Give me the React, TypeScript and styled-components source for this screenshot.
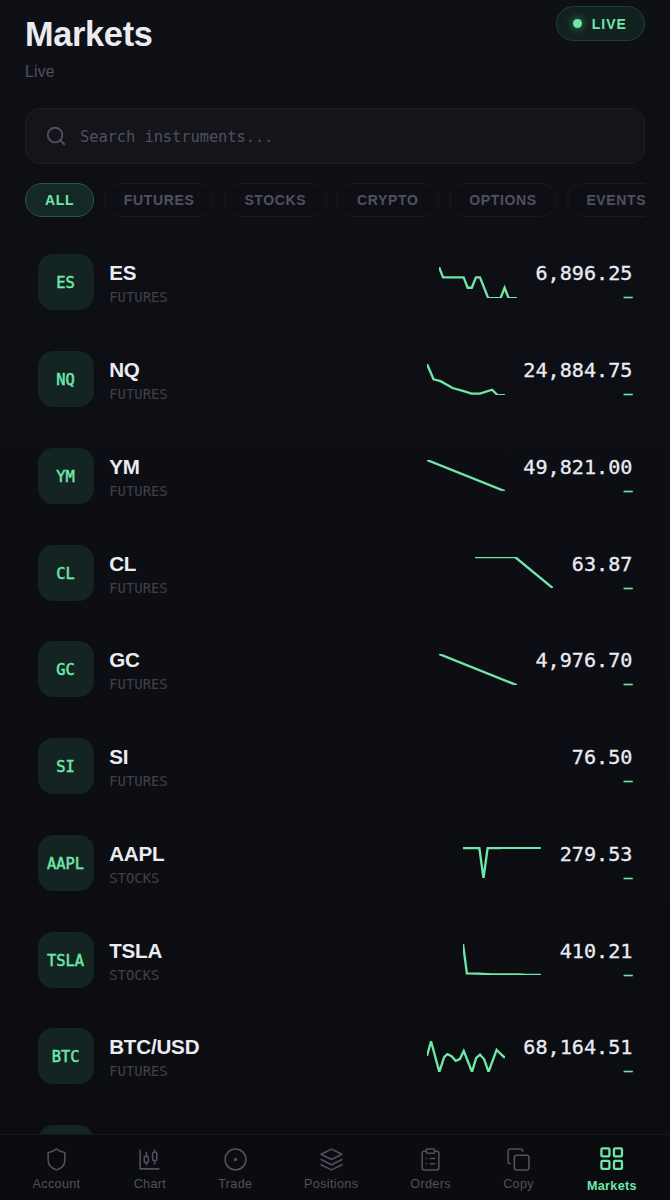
import React from "react";
import styled, { createGlobalStyle, css } from "styled-components";

const GlobalStyle = createGlobalStyle`
  * { box-sizing: border-box; }
  body {
    margin: 0;
    background: #0c0d12;
    font-family: "Liberation Sans", Arial, sans-serif;
    -webkit-font-smoothing: antialiased;
  }
`;

const MONO = `"DejaVu Sans Mono", "Liberation Mono", monospace`;
const GREEN = "#6ee7a8";

const Screen = styled.div`
  display: flex;
  flex-direction: column;
  height: 1200px;
  overflow: hidden;
  background: linear-gradient(180deg, #0f1016 0%, #0d0e13 45%, #0c0d11 100%);
`;

const Content = styled.main`
  display: flex;
  flex-direction: column;
  flex: 1;
  min-height: 0;
  overflow: hidden;
  padding: 6px 25px 0;
`;

const Header = styled.header`
  display: flex;
  justify-content: space-between;
  align-items: flex-start;
  height: 102px;
  flex: none;
`;

const Title = styled.h1`
  margin: 8px 0 0;
  font-size: 34.3px;
  line-height: 40px;
  font-weight: 700;
  letter-spacing: -0.3px;
  color: #ebebf2;
`;

const Subtitle = styled.p`
  margin: 9px 0 0;
  font-size: 15.6px;
  line-height: 18px;
  letter-spacing: 0.3px;
  color: #51505e;
`;

const LiveBadge = styled.div`
  display: flex;
  align-items: center;
  gap: 9.5px;
  width: 89px;
  height: 35px;
  padding-left: 15.8px;
  border: 1.5px solid #1e4038;
  border-radius: 18px;
  background: #11211f;
  color: ${GREEN};
  font-size: 14px;
  font-weight: 700;
  letter-spacing: 1px;
`;

const LiveDot = styled.span`
  width: 9.4px;
  height: 9.4px;
  border-radius: 50%;
  background: ${GREEN};
  box-shadow: 0 0 9px rgba(110, 231, 168, 0.6);
`;

const SearchBox = styled.div`
  display: flex;
  align-items: center;
  gap: 13px;
  flex: none;
  height: 56px;
  padding-left: 19px;
  border: 1.5px solid #1d1e23;
  border-radius: 15.6px;
  background: #14151a;
  color: #51505e;
`;

const Placeholder = styled.span`
  padding-top: 2px;
  font-family: ${MONO};
  font-size: 15.4px;
  letter-spacing: -0.06px;
  color: #51505e;
`;

const Chips = styled.div`
  display: flex;
  flex: none;
  gap: 9.4px;
  margin-top: 18.5px;
  overflow: hidden;
`;

const Chip = styled.div<{ $width: number; $active?: boolean }>`
  display: flex;
  align-items: center;
  justify-content: center;
  flex: none;
  width: ${(p) => p.$width}px;
  height: 34.5px;
  border: 1.5px solid ${(p) => (p.$active ? "#26594a" : "#1a1b20")};
  border-radius: 18px;
  background: ${(p) => (p.$active ? "#142824" : "transparent")};
  color: ${(p) => (p.$active ? GREEN : "#51505e")};
  font-size: 14px;
  font-weight: 700;
  letter-spacing: 0.65px;
`;

const List = styled.div`
  display: flex;
  flex-direction: column;
  margin-top: 17px;
`;

const Row = styled.div`
  display: flex;
  align-items: center;
  flex: none;
  height: 96.75px;
  padding: 0 12.6px;
`;

const Tile = styled.div`
  display: flex;
  align-items: center;
  justify-content: center;
  width: 56px;
  height: 56px;
  padding-top: 2px;
  border-radius: 15.6px;
  background: #142422;
  color: ${GREEN};
  font-family: ${MONO};
  font-size: 15.4px;
  -webkit-text-stroke: 0.5px ${GREEN};
`;

const Names = styled.div`
  display: flex;
  flex-direction: column;
  flex: 1;
  margin-left: 15.6px;
  padding-top: 4px;
`;

const Symbol = styled.div`
  font-size: 20.6px;
  line-height: 26px;
  font-weight: 700;
  letter-spacing: -0.2px;
  color: #ebebf2;
`;

const Kind = styled.div`
  font-family: ${MONO};
  font-size: 13.9px;
  line-height: 22px;
  color: #40404b;
`;

const Spark = styled.svg`
  display: block;
  width: 77.9px;
  height: 31.2px;
  margin-right: 18.7px;
  overflow: hidden;
`;

const Quote = styled.div`
  display: flex;
  flex-direction: column;
  align-items: flex-end;
  padding-top: 4px;
  font-family: ${MONO};
`;

const Price = styled.div`
  font-size: 20.15px;
  line-height: 26px;
  color: #ebebf2;
  -webkit-text-stroke: 0.3px #ebebf2;
`;

const Change = styled.div`
  font-size: 14px;
  line-height: 21px;
  padding-bottom: 1px;
  color: ${GREEN};
  -webkit-text-stroke: 0.6px ${GREEN};
`;

const Nav = styled.nav`
  display: flex;
  justify-content: space-between;
  flex: none;
  height: 66px;
  padding: 11.5px 33px 0 32.5px;
  border-top: 1.5px solid #15161b;
  background: #0b0c10;
`;

const NavItem = styled.div<{ $width: number; $active?: boolean }>`
  display: flex;
  flex-direction: column;
  align-items: center;
  width: ${(p) => p.$width}px;
  color: #51505e;
  font-size: 12.6px;
  line-height: 16px;
  letter-spacing: 0.35px;
  white-space: nowrap;
  ${(p) =>
    p.$active &&
    css`
      color: ${GREEN};
      font-weight: 700;
    `}
`;

const NavIcon = styled.svg<{ $active?: boolean }>`
  flex: none;
  width: ${(p) => (p.$active ? 27.4 : 25)}px;
  height: ${(p) => (p.$active ? 27.4 : 25)}px;
  margin: ${(p) => (p.$active ? "-1.2px 0 5.2px" : "0 0 4.5px")};
  fill: none;
  stroke: currentColor;
  stroke-width: ${(p) => (p.$active ? 2 : 1.5)};
  stroke-linecap: round;
  stroke-linejoin: round;
`;

const SearchIcon = () => (
  <svg width="22" height="22" viewBox="0 0 24 24" fill="none" stroke="currentColor" strokeWidth="2" strokeLinecap="round" strokeLinejoin="round">
    <circle cx="11" cy="11" r="8" />
    <path d="m21 21-4.3-4.3" />
  </svg>
);

const chips = [
  { label: "ALL", width: 69.3 },
  { label: "FUTURES", width: 110.8 },
  { label: "STOCKS", width: 103 },
  { label: "CRYPTO", width: 103 },
  { label: "OPTIONS", width: 108.8 },
  { label: "EVENTS", width: 99 },
];

const rows = [
  {
    tile: "ES", symbol: "ES", kind: "FUTURES", price: "6,896.25",
    line: "0,0 2.63,6.67 15.8,6.67 18.4,13.33 21.05,13.33 23.7,6.67 26.3,6.67 31.6,20 39.5,20 42.1,13.33 44.7,20 50,20",
  },
  {
    tile: "NQ", symbol: "NQ", kind: "FUTURES", price: "24,884.75",
    line: "0,0 4.2,9.8 8.7,11 16.4,15.4 23,17.3 28.6,19 34,19 41.8,16.5 45.2,19.9 50,20",
  },
  { tile: "YM", symbol: "YM", kind: "FUTURES", price: "49,821.00", line: "0,0 50,20" },
  { tile: "CL", symbol: "CL", kind: "FUTURES", price: "63.87", line: "0,0 25.7,0 50,20" },
  { tile: "GC", symbol: "GC", kind: "FUTURES", price: "4,976.70", line: "0,0 50,20" },
  { tile: "SI", symbol: "SI", kind: "FUTURES", price: "76.50" },
  {
    tile: "AAPL", symbol: "AAPL", kind: "STOCKS", price: "279.53",
    line: "0,0.75 10.5,0.75 13.15,20 15.8,0.75 23.7,0.7 26.3,0.4 28.9,0.6 31.6,0.4 34.2,0.6 36.8,0.4 39.5,0.6 42.1,0.4 44.7,0.6 50,0.6",
  },
  {
    tile: "TSLA", symbol: "TSLA", kind: "STOCKS", price: "410.21",
    line: "0,0 2.5,18.8 10,19 18.5,19.5 34,19.5 39.5,19.7 50,19.8",
  },
  {
    tile: "BTC", symbol: "BTC/USD", kind: "FUTURES", price: "68,164.51",
    line: "0,9.6 2.6,0.2 7.9,19.8 11,10.4 13.1,8.5 15.8,9.8 18.4,12.7 21.1,11.6 23.6,6.4 28.9,19.8 31.5,11 34,8.7 36.7,11.7 39.5,19.8 44.7,5.7 47,8 50,10.8",
  },
];

const navItems = [
  { label: "Account", width: 48, icon: <path d="M20 13c0 5-3.5 7.5-7.66 8.95a1 1 0 0 1-.67-.01C7.5 20.5 4 18 4 13V6a1 1 0 0 1 1-1c2 0 4.5-1.2 6.24-2.72a1.17 1.17 0 0 1 1.52 0C14.51 3.81 17 5 19 5a1 1 0 0 1 1 1z" /> },
  {
    label: "Chart", width: 32,
    icon: (
      <>
        <path d="M3 3v18h18M9 5v4M9 15v2M17 3v2M17 13v3" />
        <rect x="7" y="9" width="4" height="6" rx="1" />
        <rect x="15" y="5" width="4" height="8" rx="1" />
      </>
    ),
  },
  { label: "Trade", width: 32, icon: <><circle cx="12" cy="12" r="10" /><circle cx="12" cy="12" r="1" /></> },
  { label: "Positions", width: 53, icon: <path d="M12 2 2 7l10 5 10-5zM2 17l10 5 10-5M2 12l10 5 10-5" /> },
  {
    label: "Orders", width: 39,
    icon: (
      <>
        <rect x="8" y="2" width="8" height="4" rx="1" />
        <path d="M16 4h2a2 2 0 0 1 2 2v14a2 2 0 0 1-2 2H6a2 2 0 0 1-2-2V6a2 2 0 0 1 2-2h2M12 11h4M12 16h4M8 11h.01M8 16h.01" />
      </>
    ),
  },
  {
    label: "Copy", width: 30,
    icon: (
      <>
        <rect x="8" y="8" width="14" height="14" rx="2" />
        <path d="M4 16c-1.1 0-2-.9-2-2V4c0-1.1.9-2 2-2h10c1.1 0 2 .9 2 2" />
      </>
    ),
  },
  {
    label: "Markets", width: 50, active: true,
    icon: (
      <>
        <rect x="3" y="3" width="7" height="7" rx="1" />
        <rect x="14" y="3" width="7" height="7" rx="1" />
        <rect x="14" y="14" width="7" height="7" rx="1" />
        <rect x="3" y="14" width="7" height="7" rx="1" />
      </>
    ),
  },
];

export default function App() {
  return (
    <>
      <GlobalStyle />
      <Screen>
        <Content>
          <Header>
            <div>
              <Title>Markets</Title>
              <Subtitle>Live</Subtitle>
            </div>
            <LiveBadge>
              <LiveDot />
              LIVE
            </LiveBadge>
          </Header>
          <SearchBox>
            <SearchIcon />
            <Placeholder>Search instruments...</Placeholder>
          </SearchBox>
          <Chips>
            {chips.map((c, i) => (
              <Chip key={c.label} $width={c.width} $active={i === 0}>
                {c.label}
              </Chip>
            ))}
          </Chips>
          <List>
            {rows.map((r) => (
              <Row key={r.symbol}>
                <Tile>{r.tile}</Tile>
                <Names>
                  <Symbol>{r.symbol}</Symbol>
                  <Kind>{r.kind}</Kind>
                </Names>
                {r.line && (
                  <Spark viewBox="0 0 50 20" preserveAspectRatio="none">
                    <polyline points={r.line} fill="none" stroke={GREEN} strokeWidth="1.5" />
                  </Spark>
                )}
                <Quote>
                  <Price>{r.price}</Price>
                  <Change>—</Change>
                </Quote>
              </Row>
            ))}
            <Row>
              <Tile />
            </Row>
          </List>
        </Content>
        <Nav>
          {navItems.map((n) => (
            <NavItem key={n.label} $width={n.width} $active={n.active}>
              <NavIcon viewBox="0 0 24 24" $active={n.active}>
                {n.icon}
              </NavIcon>
              {n.label}
            </NavItem>
          ))}
        </Nav>
      </Screen>
    </>
  );
}
